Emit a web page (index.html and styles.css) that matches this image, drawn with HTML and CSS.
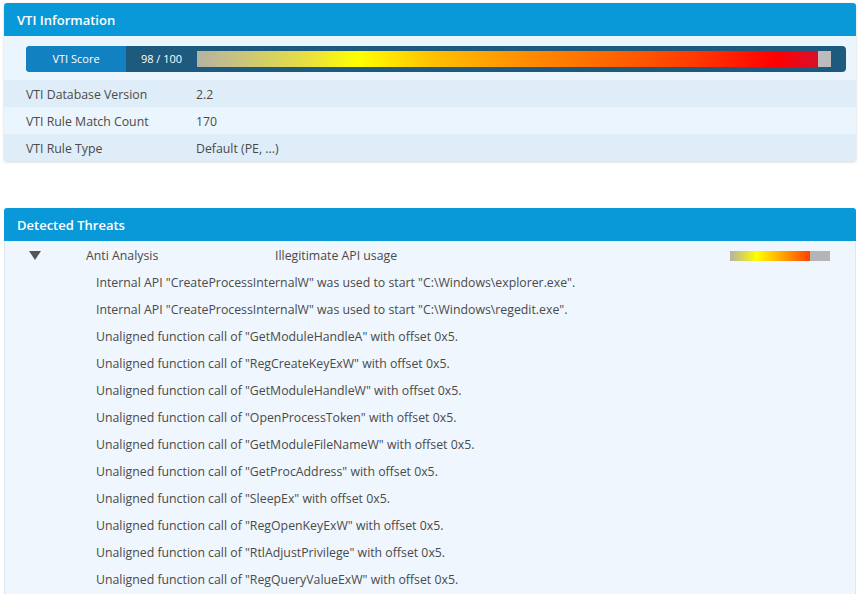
FILE: index.html
```html
<!DOCTYPE html>
<html>
<head>
<meta charset="utf-8">
<link rel="stylesheet" href="styles.css">
</head>
<body>
<section class="panel info">
  <header class="panel-head">VTI Information</header>
  <div class="panel-body">
    <div class="score">
      <div class="score-label">VTI Score</div>
      <div class="score-value">98 / 100</div>
      <div class="score-track">
        <div class="score-fill" style="flex: 98"></div>
        <div class="score-rest" style="flex: 2"></div>
      </div>
    </div>
    <div class="info-rows">
      <div class="info-row alt"><span class="info-key">VTI Database Version</span><span class="info-val">2.2</span></div>
      <div class="info-row"><span class="info-key">VTI Rule Match Count</span><span class="info-val">170</span></div>
      <div class="info-row alt"><span class="info-key">VTI Rule Type</span><span class="info-val">Default (PE, ...)</span></div>
    </div>
  </div>
</section>

<section class="panel threats">
  <header class="panel-head">Detected Threats</header>
  <div class="panel-body threats-body">
    <div class="threat-row">
      <span class="toggle"><svg width="12" height="9" viewBox="0 0 12 9"><polygon points="0,0 12,0 6,9" fill="#555"/></svg></span>
      <span class="threat-cat">Anti Analysis</span>
      <span class="threat-name">Illegitimate API usage</span>
      <span class="mini-bar"><span class="mini-fill" style="width: 80px"></span></span>
    </div>
    <ul class="details">
      <li>Internal API "CreateProcessInternalW" was used to start "C:\Windows\explorer.exe".</li>
      <li>Internal API "CreateProcessInternalW" was used to start "C:\Windows\regedit.exe".</li>
      <li>Unaligned function call of "GetModuleHandleA" with offset 0x5.</li>
      <li>Unaligned function call of "RegCreateKeyExW" with offset 0x5.</li>
      <li>Unaligned function call of "GetModuleHandleW" with offset 0x5.</li>
      <li>Unaligned function call of "OpenProcessToken" with offset 0x5.</li>
      <li>Unaligned function call of "GetModuleFileNameW" with offset 0x5.</li>
      <li>Unaligned function call of "GetProcAddress" with offset 0x5.</li>
      <li>Unaligned function call of "SleepEx" with offset 0x5.</li>
      <li>Unaligned function call of "RegOpenKeyExW" with offset 0x5.</li>
      <li>Unaligned function call of "RtlAdjustPrivilege" with offset 0x5.</li>
      <li>Unaligned function call of "RegQueryValueExW" with offset 0x5.</li>
    </ul>
  </div>
</section>
</body>
</html>
```
FILE: styles.css
```css
html, body {
  margin: 0;
  background: #ffffff;
}
html {
  height: 595px;
  overflow: hidden;
}
body {
  box-sizing: border-box;
  height: 595px;
  padding: 3px 5px 0 4px;
  font-family: "Open Sans", "Noto Sans", sans-serif;
  font-size: 12.3px;
  color: #4a4a4a;
  overflow: hidden;
}
.panel {
  width: 852px;
  border-radius: 3px 3px 0 0;
}
.info {
  box-shadow: 0 1px 3px rgba(0,0,0,0.18);
  border-radius: 3px;
}
.threats {
  margin-top: 47px;
}
.panel-head {
  height: 33px;
  line-height: 34px;
  background: #0a99d8;
  color: #fff;
  font-weight: 600;
  font-size: 13px;
  padding-left: 13px;
  border-radius: 3px 3px 0 0;
}
.info .panel-body {
  background: #ebf5fd;
  padding: 10px 0 0 0;
  border-radius: 0 0 3px 3px;
}
.score {
  display: flex;
  height: 26px;
  margin: 0 10px 8px 22px;
  background: #1d5a7e;
  border-radius: 4px;
  overflow: hidden;
  color: #fff;
  font-size: 11px;
  line-height: 26px;
}
.score-label {
  width: 100px;
  text-align: center;
  background: #1281c1;
}
.score-value {
  width: 71px;
  text-align: center;
}
.score-track {
  flex: 1;
  display: flex;
  margin: 5px 15px 5px 0;
  height: 16px;
  background: #b9b9b9;
}
.score-fill {
  background: linear-gradient(to right, #b6b2a2 0%, #e8e040 18%, #ffff00 26%, #ffc000 38%, #ff9000 52%, #ff6a00 65%, #ff3a00 80%, #ff0000 93%, #d8102a 100%);
}
.score-rest {
  background: #bcbcbc;
}
.info-rows .info-row {
  display: flex;
  height: 27px;
  line-height: 29px;
  padding-left: 22px;
  background: #ebf5fd;
}
.info-rows .info-row.alt {
  background: #dfedf8;
}
.info-key {
  width: 170px;
}
.threats-body {
  background: #eff6fd;
  border-left: 1px solid #dfe7ef;
  border-right: 1px solid #dfe7ef;
  height: 353px;
  overflow: hidden;
}
.threat-row {
  display: flex;
  align-items: center;
  height: 28px;
  padding-top: 1px;
  box-sizing: border-box;
}
.toggle {
  display: flex;
  width: 12px;
  margin-left: 24px;
}
.threat-cat {
  margin-left: 45px;
  width: 189px;
}
.threat-name {
  flex: 1;
}
.mini-bar {
  display: flex;
  width: 100px;
  height: 10px;
  background: #b5b5b5;
  margin-right: 25px;
}
.mini-fill {
  display: block;
  height: 10px;
  background: linear-gradient(to right, #b6b2a2 0px, #ffff00 27px, #ff9000 58px, #ff4000 80px);
}
.details {
  list-style: none;
  margin: 0;
  padding: 0 0 0 91px;
}
.details li {
  height: 27px;
  line-height: 28px;
}
```
